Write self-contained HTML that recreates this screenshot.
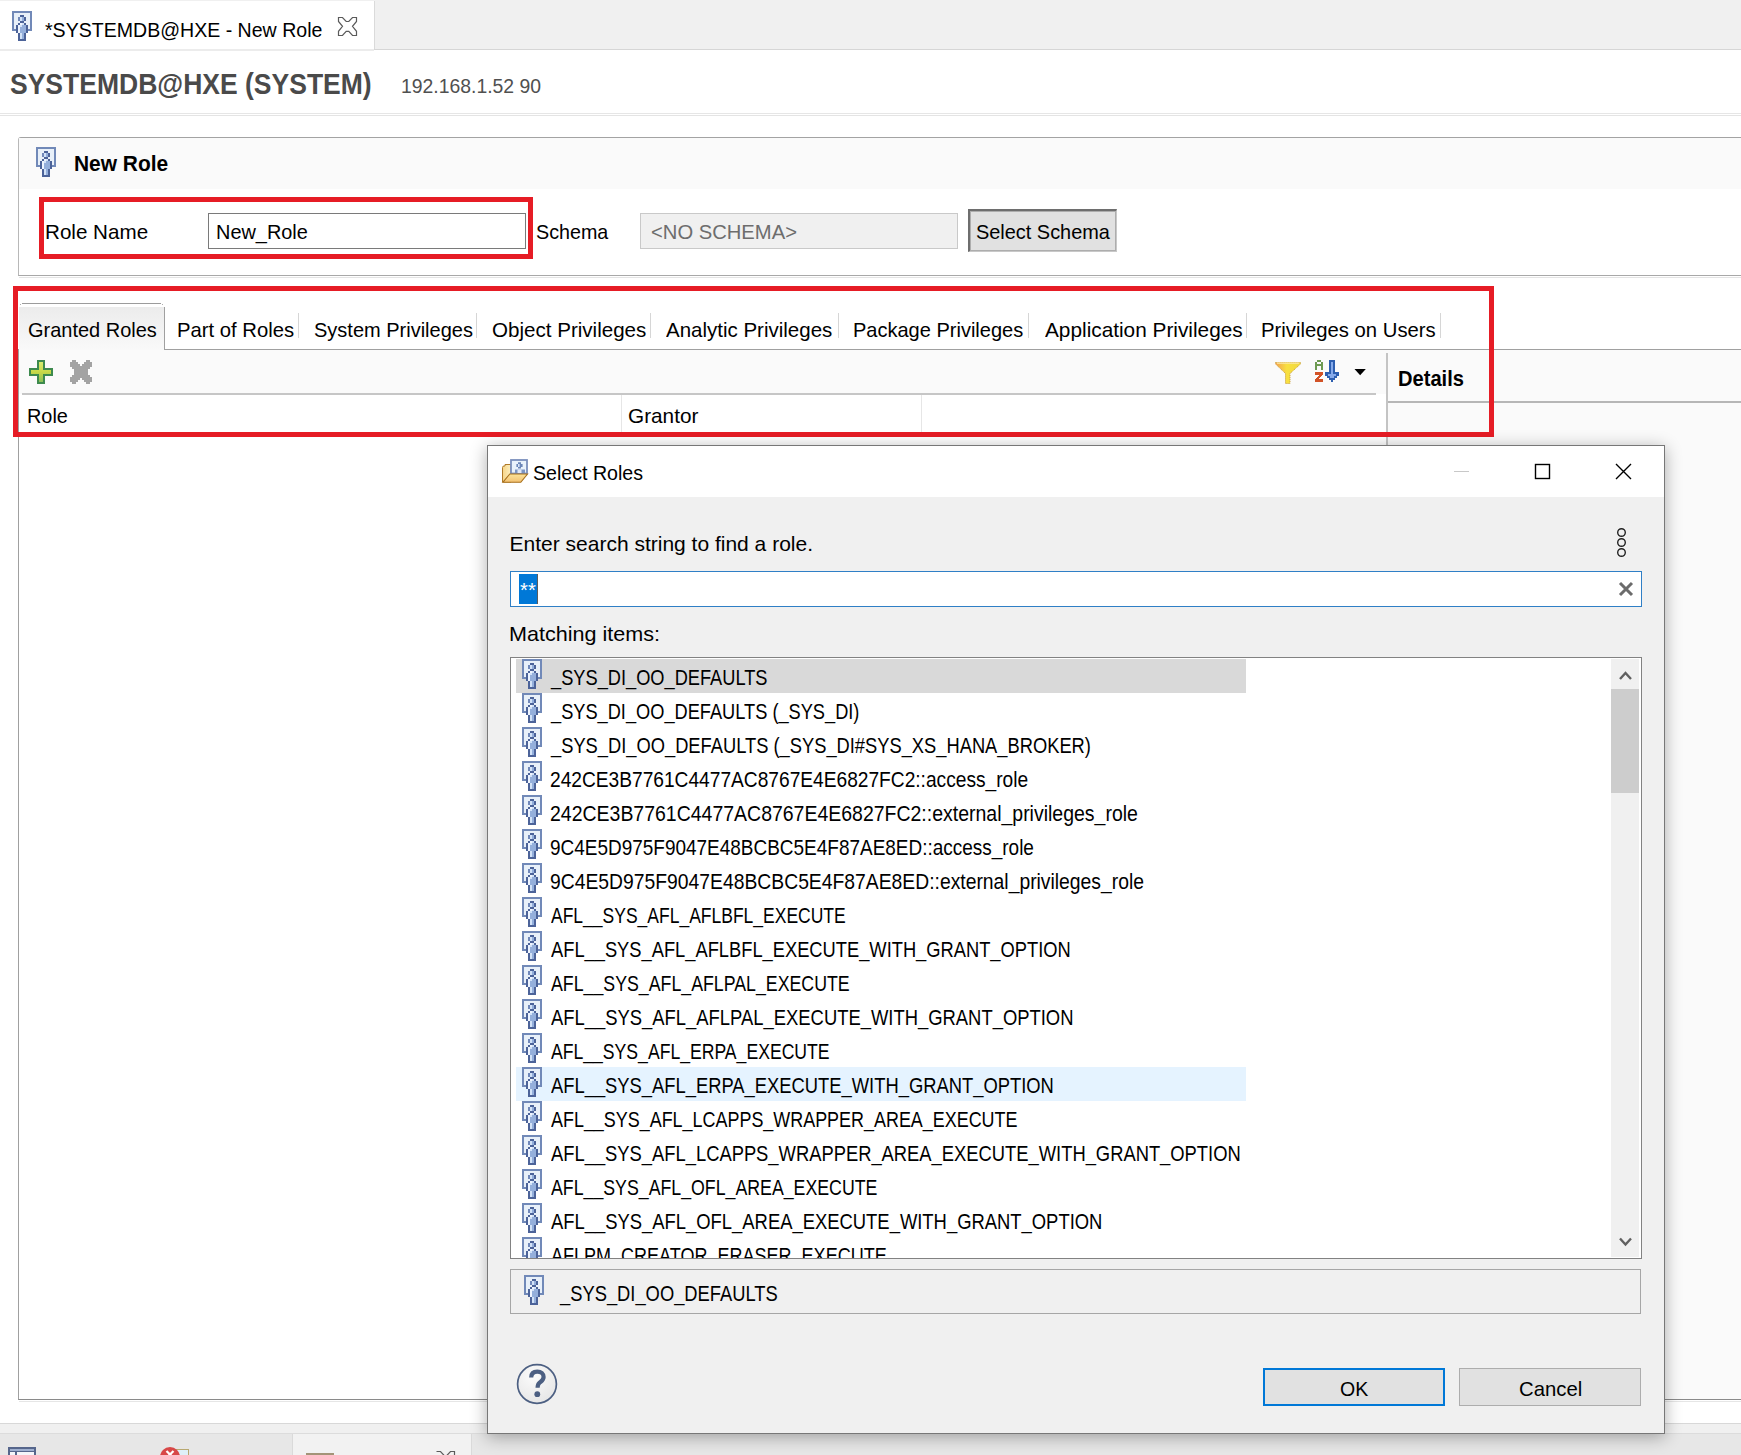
<!DOCTYPE html>
<html><head><meta charset="utf-8"><style>
html,body{margin:0;padding:0;}
body{width:1741px;height:1455px;overflow:hidden;position:relative;background:#fff;font-family:"Liberation Sans",sans-serif;}
.t{position:absolute;white-space:nowrap;transform-origin:0 0;}
.b{position:absolute;}
</style></head><body>
<svg width="0" height="0" style="position:absolute"><defs><symbol id="person" viewBox="0 0 10 15"><rect x="0" y="0" width="1" height="1" fill="#7189b8"/><rect x="1" y="0" width="1" height="1" fill="#7189b8"/><rect x="2" y="0" width="1" height="1" fill="#7189b8"/><rect x="3" y="0" width="1" height="1" fill="#7189b8"/><rect x="4" y="0" width="1" height="1" fill="#7189b8"/><rect x="5" y="0" width="1" height="1" fill="#7189b8"/><rect x="6" y="0" width="1" height="1" fill="#7189b8"/><rect x="7" y="0" width="1" height="1" fill="#7189b8"/><rect x="8" y="0" width="1" height="1" fill="#7189b8"/><rect x="9" y="0" width="1" height="1" fill="#7189b8"/><rect x="0" y="1" width="1" height="1" fill="#7189b8"/><rect x="1" y="1" width="1" height="1" fill="#e8f0f9"/><rect x="2" y="1" width="1" height="1" fill="#e8f0f9"/><rect x="3" y="1" width="1" height="1" fill="#e8f0f9"/><rect x="4" y="1" width="1" height="1" fill="#e8f0f9"/><rect x="5" y="1" width="1" height="1" fill="#e8f0f9"/><rect x="6" y="1" width="1" height="1" fill="#e8f0f9"/><rect x="7" y="1" width="1" height="1" fill="#e8f0f9"/><rect x="8" y="1" width="1" height="1" fill="#e8f0f9"/><rect x="9" y="1" width="1" height="1" fill="#7189b8"/><rect x="0" y="2" width="1" height="1" fill="#7189b8"/><rect x="1" y="2" width="1" height="1" fill="#e8f0f9"/><rect x="2" y="2" width="1" height="1" fill="#e8f0f9"/><rect x="3" y="2" width="1" height="1" fill="#e8f0f9"/><rect x="4" y="2" width="1" height="1" fill="#4c6399"/><rect x="5" y="2" width="1" height="1" fill="#4c6399"/><rect x="6" y="2" width="1" height="1" fill="#e8f0f9"/><rect x="7" y="2" width="1" height="1" fill="#e8f0f9"/><rect x="8" y="2" width="1" height="1" fill="#e8f0f9"/><rect x="9" y="2" width="1" height="1" fill="#7189b8"/><rect x="0" y="3" width="1" height="1" fill="#7189b8"/><rect x="1" y="3" width="1" height="1" fill="#e8f0f9"/><rect x="2" y="3" width="1" height="1" fill="#e8f0f9"/><rect x="3" y="3" width="1" height="1" fill="#7088ba"/><rect x="4" y="3" width="1" height="1" fill="#d2e2f7"/><rect x="5" y="3" width="1" height="1" fill="#94afdb"/><rect x="6" y="3" width="1" height="1" fill="#4c6399"/><rect x="7" y="3" width="1" height="1" fill="#e8f0f9"/><rect x="8" y="3" width="1" height="1" fill="#e8f0f9"/><rect x="9" y="3" width="1" height="1" fill="#7189b8"/><rect x="0" y="4" width="1" height="1" fill="#7189b8"/><rect x="1" y="4" width="1" height="1" fill="#e8f0f9"/><rect x="2" y="4" width="1" height="1" fill="#e8f0f9"/><rect x="3" y="4" width="1" height="1" fill="#7088ba"/><rect x="4" y="4" width="1" height="1" fill="#d2e2f7"/><rect x="5" y="4" width="1" height="1" fill="#94afdb"/><rect x="6" y="4" width="1" height="1" fill="#4c6399"/><rect x="7" y="4" width="1" height="1" fill="#e8f0f9"/><rect x="8" y="4" width="1" height="1" fill="#e8f0f9"/><rect x="9" y="4" width="1" height="1" fill="#7189b8"/><rect x="0" y="5" width="1" height="1" fill="#7189b8"/><rect x="1" y="5" width="1" height="1" fill="#e8f0f9"/><rect x="2" y="5" width="1" height="1" fill="#e8f0f9"/><rect x="3" y="5" width="1" height="1" fill="#e8f0f9"/><rect x="4" y="5" width="1" height="1" fill="#4c6399"/><rect x="5" y="5" width="1" height="1" fill="#4c6399"/><rect x="6" y="5" width="1" height="1" fill="#e8f0f9"/><rect x="7" y="5" width="1" height="1" fill="#e8f0f9"/><rect x="8" y="5" width="1" height="1" fill="#e8f0f9"/><rect x="9" y="5" width="1" height="1" fill="#7189b8"/><rect x="0" y="6" width="1" height="1" fill="#7189b8"/><rect x="1" y="6" width="1" height="1" fill="#e8f0f9"/><rect x="2" y="6" width="1" height="1" fill="#e8f0f9"/><rect x="3" y="6" width="1" height="1" fill="#4c6399"/><rect x="4" y="6" width="1" height="1" fill="#eef5ff"/><rect x="5" y="6" width="1" height="1" fill="#d2e2f7"/><rect x="6" y="6" width="1" height="1" fill="#4c6399"/><rect x="7" y="6" width="1" height="1" fill="#e8f0f9"/><rect x="8" y="6" width="1" height="1" fill="#e8f0f9"/><rect x="9" y="6" width="1" height="1" fill="#7189b8"/><rect x="0" y="7" width="1" height="1" fill="#7189b8"/><rect x="1" y="7" width="1" height="1" fill="#e8f0f9"/><rect x="2" y="7" width="1" height="1" fill="#4c6399"/><rect x="3" y="7" width="1" height="1" fill="#eef5ff"/><rect x="4" y="7" width="1" height="1" fill="#d2e2f7"/><rect x="5" y="7" width="1" height="1" fill="#94afdb"/><rect x="6" y="7" width="1" height="1" fill="#94afdb"/><rect x="7" y="7" width="1" height="1" fill="#4c6399"/><rect x="8" y="7" width="1" height="1" fill="#e8f0f9"/><rect x="9" y="7" width="1" height="1" fill="#7189b8"/><rect x="0" y="8" width="1" height="1" fill="#7189b8"/><rect x="1" y="8" width="1" height="1" fill="#e8f0f9"/><rect x="2" y="8" width="1" height="1" fill="#4c6399"/><rect x="3" y="8" width="1" height="1" fill="#eef5ff"/><rect x="4" y="8" width="1" height="1" fill="#94afdb"/><rect x="5" y="8" width="1" height="1" fill="#94afdb"/><rect x="6" y="8" width="1" height="1" fill="#94afdb"/><rect x="7" y="8" width="1" height="1" fill="#4c6399"/><rect x="8" y="8" width="1" height="1" fill="#e8f0f9"/><rect x="9" y="8" width="1" height="1" fill="#7189b8"/><rect x="0" y="9" width="1" height="1" fill="#7189b8"/><rect x="1" y="9" width="1" height="1" fill="#7189b8"/><rect x="2" y="9" width="1" height="1" fill="#4c6399"/><rect x="3" y="9" width="1" height="1" fill="#eef5ff"/><rect x="4" y="9" width="1" height="1" fill="#94afdb"/><rect x="5" y="9" width="1" height="1" fill="#94afdb"/><rect x="6" y="9" width="1" height="1" fill="#94afdb"/><rect x="7" y="9" width="1" height="1" fill="#4c6399"/><rect x="8" y="9" width="1" height="1" fill="#7189b8"/><rect x="9" y="9" width="1" height="1" fill="#7189b8"/><rect x="2" y="10" width="1" height="1" fill="#4c6399"/><rect x="3" y="10" width="1" height="1" fill="#eef5ff"/><rect x="4" y="10" width="1" height="1" fill="#94afdb"/><rect x="5" y="10" width="1" height="1" fill="#94afdb"/><rect x="6" y="10" width="1" height="1" fill="#94afdb"/><rect x="7" y="10" width="1" height="1" fill="#4c6399"/><rect x="3" y="11" width="1" height="1" fill="#4c6399"/><rect x="4" y="11" width="1" height="1" fill="#d2e2f7"/><rect x="5" y="11" width="1" height="1" fill="#94afdb"/><rect x="6" y="11" width="1" height="1" fill="#4c6399"/><rect x="3" y="12" width="1" height="1" fill="#4c6399"/><rect x="4" y="12" width="1" height="1" fill="#d2e2f7"/><rect x="5" y="12" width="1" height="1" fill="#94afdb"/><rect x="6" y="12" width="1" height="1" fill="#4c6399"/><rect x="3" y="13" width="1" height="1" fill="#4c6399"/><rect x="4" y="13" width="1" height="1" fill="#d2e2f7"/><rect x="5" y="13" width="1" height="1" fill="#94afdb"/><rect x="6" y="13" width="1" height="1" fill="#4c6399"/><rect x="3" y="14" width="1" height="1" fill="#4c6399"/><rect x="4" y="14" width="1" height="1" fill="#4c6399"/><rect x="5" y="14" width="1" height="1" fill="#4c6399"/><rect x="6" y="14" width="1" height="1" fill="#4c6399"/></symbol></defs></svg>
<div class="b" style="left:0px;top:0px;width:1741px;height:50px;background:#f0f0f0;"></div>
<div class="b" style="left:0px;top:1px;width:374px;height:49px;background:#fff;"></div>
<div class="b" style="left:374px;top:1px;width:1px;height:48px;background:#dadada;"></div>
<div class="b" style="left:374px;top:49px;width:1367px;height:1px;background:#d6d6d6;"></div>
<div class="b" style="left:0px;top:49px;width:374px;height:2px;background:#ececec;"></div>
<svg class="b" style="left:12px;top:11px" width="20" height="30" shape-rendering="crispEdges"><use href="#person"/></svg>
<div class="t" style="left:45.27px;top:16.62px;font-size:21px;line-height:26px;color:#000;transform:scaleX(0.9311);">*SYSTEMDB@HXE - New Role</div>
<svg class="b" style="left:336px;top:15px" width="24" height="24" viewBox="336 15 24 24"><path d="M338.5,17.5 H342.5 L346.2,21.5 H348.8 L352.5,17.5 H356.5 V21.5 L352.5,26.3 L356.5,31.3 V35.5 H352.5 L348.8,31.3 H346.2 L342.5,35.5 H338.5 V31.3 L342.5,26.3 L338.5,21.5 Z" fill="none" stroke="#5a5a5a" stroke-width="1.2"/></svg>
<div class="t" style="left:9.99px;top:66.25px;font-size:29px;line-height:36px;color:#4a4a4a;font-weight:bold;transform:scaleX(0.9142);">SYSTEMDB@HXE (SYSTEM)</div>
<div class="t" style="left:401.16px;top:72.60px;font-size:20.5px;line-height:26px;color:#505050;transform:scaleX(0.9449);">192.168.1.52 90</div>
<div class="b" style="left:0px;top:113px;width:1741px;height:1px;background:#e6e6e6;"></div>
<div class="b" style="left:0px;top:115px;width:1741px;height:1px;background:#e4e4e4;"></div>
<div class="b" style="left:18px;top:137px;width:1723px;height:139px;background:#fff;border-top:1px solid #a3a3a3;border-left:1px solid #b8b8b8;border-bottom:1px solid #a8a8a8;border-top-left-radius:3px;box-sizing:border-box;"></div>
<div class="b" style="left:19px;top:138px;width:1722px;height:51px;background:#fafafa;"></div>
<div class="b" style="left:19px;top:277px;width:1722px;height:1px;background:#e4e4e4;"></div>
<svg class="b" style="left:36px;top:147px" width="20" height="30" shape-rendering="crispEdges"><use href="#person"/></svg>
<div class="t" style="left:74.23px;top:151.05px;font-size:21.5px;line-height:27px;color:#000;font-weight:bold;transform:scaleX(0.9737);">New Role</div>
<div class="t" style="left:44.94px;top:218.72px;font-size:21px;line-height:26px;color:#000;transform:scaleX(0.9814);">Role Name</div>
<div class="b" style="left:208px;top:213px;width:318px;height:36px;background:#fff;border:1px solid #7a7a7a;box-sizing:border-box;"></div>
<div class="t" style="left:216.30px;top:219.12px;font-size:21px;line-height:26px;color:#000;transform:scaleX(0.9479);">New_Role</div>
<div class="t" style="left:535.86px;top:218.52px;font-size:21px;line-height:26px;color:#000;transform:scaleX(0.9382);">Schema</div>
<div class="b" style="left:640px;top:213px;width:318px;height:36px;background:#f0f0f0;border:1px solid #c9c9c9;box-sizing:border-box;"></div>
<div class="t" style="left:650.74px;top:218.72px;font-size:21px;line-height:26px;color:#6d6d6d;transform:scaleX(0.9620);">&lt;NO SCHEMA&gt;</div>
<div class="b" style="left:968px;top:209px;width:149px;height:43px;background:#e1e1e1;border-top:2px solid #6e6e6e;border-left:2px solid #6e6e6e;border-right:1px solid #c8c8c8;border-bottom:1px solid #c8c8c8;box-sizing:border-box;"></div>
<div class="b" style="left:970px;top:211px;width:146px;height:40px;border:1px solid #adadad;box-sizing:border-box;"></div>
<div class="t" style="left:975.65px;top:219.32px;font-size:21px;line-height:26px;color:#000;transform:scaleX(0.9479);">Select Schema</div>
<div class="b" style="left:18px;top:349px;width:1723px;height:1051px;background:#fff;border-left:1px solid #a0a0a0;border-bottom:1px solid #8a8a8a;box-sizing:border-box;"></div>
<div class="b" style="left:164px;top:349px;width:1577px;height:1px;background:#a0a0a0;"></div>
<div class="b" style="left:19px;top:307px;width:145px;height:43px;background:linear-gradient(#ececec,#f9f9f9);"></div>
<div class="b" style="left:22px;top:303px;width:139px;height:1px;background:#9c9c9c;"></div>
<div class="b" style="left:20px;top:304px;width:1px;height:1px;background:#b0b0b0;"></div>
<div class="b" style="left:162px;top:304px;width:1px;height:1px;background:#b0b0b0;"></div>
<div class="b" style="left:164px;top:307px;width:1px;height:43px;background:#a0a0a0;"></div>
<div class="t" style="left:27.75px;top:316.52px;font-size:21px;line-height:26px;color:#000;transform:scaleX(0.9515);">Granted Roles</div>
<div class="t" style="left:176.77px;top:316.52px;font-size:21px;line-height:26px;color:#000;transform:scaleX(0.9647);">Part of Roles</div>
<div class="b" style="left:298px;top:313px;width:1px;height:25px;background:#d6d6d6;"></div>
<div class="t" style="left:313.55px;top:316.52px;font-size:21px;line-height:26px;color:#000;transform:scaleX(0.9521);">System Privileges</div>
<div class="b" style="left:476px;top:313px;width:1px;height:25px;background:#d6d6d6;"></div>
<div class="t" style="left:491.62px;top:316.52px;font-size:21px;line-height:26px;color:#000;transform:scaleX(0.9795);">Object Privileges</div>
<div class="b" style="left:650px;top:313px;width:1px;height:25px;background:#d6d6d6;"></div>
<div class="t" style="left:666.40px;top:316.52px;font-size:21px;line-height:26px;color:#000;transform:scaleX(0.9759);">Analytic Privileges</div>
<div class="b" style="left:838px;top:313px;width:1px;height:25px;background:#d6d6d6;"></div>
<div class="t" style="left:852.89px;top:316.52px;font-size:21px;line-height:26px;color:#000;transform:scaleX(0.9528);">Package Privileges</div>
<div class="b" style="left:1028px;top:313px;width:1px;height:25px;background:#d6d6d6;"></div>
<div class="t" style="left:1044.50px;top:316.52px;font-size:21px;line-height:26px;color:#000;transform:scaleX(0.9905);">Application Privileges</div>
<div class="b" style="left:1246px;top:313px;width:1px;height:25px;background:#d6d6d6;"></div>
<div class="t" style="left:1260.67px;top:316.52px;font-size:21px;line-height:26px;color:#000;transform:scaleX(0.9657);">Privileges on Users</div>
<div class="b" style="left:1440px;top:313px;width:1px;height:25px;background:#d6d6d6;"></div>
<div class="b" style="left:19px;top:350px;width:1368px;height:44px;background:#fafafa;"></div>
<div class="b" style="left:22px;top:393px;width:1354px;height:2px;background:#c6c6c6;"></div>
<svg class="b" style="left:29px;top:360px" width="24" height="24" viewBox="0 0 24 24" shape-rendering="crispEdges"><defs><linearGradient id="pg" x1="0" y1="0" x2="0" y2="1"><stop offset="0" stop-color="#d8ec70"/><stop offset="0.5" stop-color="#c8d848"/><stop offset="1" stop-color="#88c058"/></linearGradient></defs><path d="M8,0 H16 V8 H24 V16 H16 V24 H8 V16 H0 V8 H8 Z" fill="#3d8a4e"/><path d="M10,2 H14 V10 H22 V14 H14 V22 H10 V14 H2 V10 H10 Z" fill="url(#pg)"/></svg>
<svg class="b" style="left:70px;top:360px" width="22" height="24" viewBox="0 0 22 24" shape-rendering="crispEdges"><path d="M2,0 H6 V2 H8 V4 H10 V6 H12 V4 H14 V2 H16 V0 H20 V2 H22 V7 H20 V9 H18 V15 H20 V17 H22 V22 H20 V24 H16 V22 H14 V20 H12 V18 H10 V20 H8 V22 H6 V24 H2 V22 H0 V17 H2 V15 H4 V9 H2 V7 H0 V2 H2 Z" fill="#a3a3a3"/></svg>
<svg class="b" style="left:1274px;top:360px" width="28" height="26" viewBox="1274 360 28 26"><defs><linearGradient id="fg" x1="0" y1="0" x2="1" y2="0"><stop offset="0" stop-color="#f4a050"/><stop offset="0.45" stop-color="#f8e040"/><stop offset="1" stop-color="#f0d840"/></linearGradient></defs><path d="M1275.5,362.5 H1300.5 V364 L1290,373.5 V383.5 H1285.5 V373.5 L1275.5,364 Z" fill="url(#fg)" stroke="#c9a03a" stroke-width="0.9" stroke-dasharray="1.2,0.8"/><path d="M1277,362.6 H1299 V363.8 H1277 Z" fill="#fbe7a0"/></svg>
<svg class="b" style="left:1313px;top:359px" width="28" height="26" viewBox="1313 359 28 26" shape-rendering="crispEdges"><path d="M1315,370 V362 H1317 V360 H1321 V362 H1323 V370 H1321 V366 H1317 V370 Z M1317,362 V364 H1321 V362 Z" fill="#6d9a52" fill-rule="evenodd"/><path d="M1315,372 H1323 V375 L1318.5,379 H1323 V382 H1315 V379 L1319.5,375 H1315 Z" fill="#d25226"/><path d="M1329,360 H1335 V372 H1339 V376 H1337 V378 H1335 V380 H1333 V382 H1331 V380 H1329 V378 H1327 V376 H1325 V372 H1329 Z" fill="#2d5fb0"/><path d="M1331,362 H1333 V374 H1336 V376 H1334 V378 H1332 V380 V378 H1330 V376 H1328 V374 H1331 Z" fill="#86aaea"/></svg>
<svg class="b" style="left:1354px;top:368px" width="13" height="8" viewBox="0 0 13 8"><path d="M0.5,1 H11.8 L6.15,7.2 Z" fill="#000"/></svg>
<div class="b" style="left:1387px;top:350px;width:354px;height:1049px;background:#fafafa;"></div>
<div class="b" style="left:1386px;top:353px;width:2px;height:1046px;background:#c4c4c4;"></div>
<div class="b" style="left:1388px;top:401px;width:353px;height:2px;background:#b6b6b6;"></div>
<div class="t" style="left:1398.27px;top:366.35px;font-size:21.5px;line-height:27px;color:#000;font-weight:bold;transform:scaleX(0.9348);">Details</div>
<div class="t" style="left:27.41px;top:402.62px;font-size:21px;line-height:26px;color:#000;transform:scaleX(0.9475);">Role</div>
<div class="t" style="left:627.71px;top:402.52px;font-size:21px;line-height:26px;color:#000;transform:scaleX(0.9886);">Grantor</div>
<div class="b" style="left:621px;top:395px;width:1px;height:41px;background:#e6e6e6;"></div>
<div class="b" style="left:921px;top:395px;width:1px;height:41px;background:#e6e6e6;"></div>
<div class="b" style="left:39px;top:197px;width:494px;height:62px;border:5px solid #e61c25;box-sizing:border-box;"></div>
<div class="b" style="left:13px;top:286px;width:1481px;height:151px;border:5px solid #e61c25;box-sizing:border-box;"></div>
<div class="b" style="left:0px;top:1400px;width:1741px;height:55px;background:#fff;"></div>
<div class="b" style="left:19px;top:1401px;width:1722px;height:1px;background:#e6e6e6;"></div>
<div class="b" style="left:0px;top:1423px;width:1741px;height:1px;background:#d8d8d8;"></div>
<div class="b" style="left:0px;top:1424px;width:1741px;height:9px;background:#f0f0f0;"></div>
<div class="b" style="left:0px;top:1433px;width:1741px;height:1px;background:#dcdcdc;"></div>
<div class="b" style="left:0px;top:1434px;width:1741px;height:21px;background:#e7e7e7;"></div>
<div class="b" style="left:292px;top:1434px;width:180px;height:21px;background:#f2f2f2;border-left:1px solid #dadada;border-right:1px solid #dadada;box-sizing:border-box;"></div>
<div class="b" style="left:8px;top:1447px;width:28px;height:8px;background:#56668c;"></div>
<div class="b" style="left:10px;top:1449px;width:24px;height:2px;background:#9fb0d0;"></div>
<div class="b" style="left:10px;top:1452px;width:5px;height:3px;background:#f4f6fa;"></div>
<div class="b" style="left:17px;top:1452px;width:17px;height:3px;background:#f4f6fa;"></div>
<svg class="b" style="left:158px;top:1444px" width="34" height="11"><rect x="17.5" y="5.5" width="13" height="10" fill="#dff0f8" stroke="#b8a870"/><circle cx="12" cy="13" r="10" fill="#d84848"/><path d="M8.5,7 L15.5,14 M15.5,7 L8.5,14" stroke="#fff" stroke-width="2.2"/></svg>
<div class="b" style="left:306px;top:1453px;width:28px;height:2px;background:#a39478;"></div>
<svg class="b" style="left:434px;top:1449px" width="24" height="6" viewBox="434 1449 24 6"><path d="M436.5,1451.5 H440.5 L444.2,1455.5 H446.8 L450.5,1451.5 H454.5 V1455.5" fill="none" stroke="#5a5a5a" stroke-width="1.2"/></svg>
<div class="b" style="left:487px;top:445px;width:1178px;height:989px;background:#f0f0f0;border:1px solid #777;box-sizing:border-box;box-shadow:0 3px 16px rgba(0,0,0,0.32);z-index:5;"></div>
<div class="b" style="left:488px;top:446px;width:1176px;height:51px;background:#fff;z-index:5;"></div>
<svg class="b" style="left:498px;top:455px;z-index:6" width="34" height="32" viewBox="498 455 34 32"><defs><linearGradient id="fo" x1="0" y1="0" x2="0" y2="1"><stop offset="0" stop-color="#fbe39a"/><stop offset="1" stop-color="#f3c172"/></linearGradient><linearGradient id="fb" x1="0" y1="0" x2="1" y2="0"><stop offset="0" stop-color="#f6d488"/><stop offset="1" stop-color="#fcefc0"/></linearGradient></defs><path d="M502.5,482 V467.5 Q502.5,466 504,466 H505 V464.5 H511 V482 Z" fill="url(#fb)" stroke="#b07a28" stroke-width="1"/><rect x="511" y="460" width="16" height="13.5" fill="#e9f2fb" stroke="#7a8fbc" stroke-width="1.8"/><path d="M518,462.3 h3 v1.6 h1.6 v3 h-1.6 v1.6 h-3 v-1.6 h-1.6 v-3 h1.6 z" fill="#6b86b8"/><rect x="518" y="464" width="1.6" height="3" fill="#d8e6fa"/><path d="M515,469.5 h10 v3.5 h-10 z" fill="#7d96c4"/><path d="M517.5,469.5 h4 v3.5 h-4 z" fill="#e0e8f8"/><path d="M502.8,482.3 L509.8,474 H527.5 L520.8,482.3 Z" fill="url(#fo)" stroke="#a8701c" stroke-width="1.1"/></svg>
<div class="t" style="left:533.07px;top:459.82px;font-size:21px;line-height:26px;color:#000;transform:scaleX(0.9336);z-index:6;">Select Roles</div>
<div class="b" style="left:1454px;top:471px;width:15px;height:1px;background:#c8c8c8;z-index:6;"></div>
<svg class="b" style="left:1534px;top:463px;z-index:6" width="17" height="17"><rect x="1.5" y="1.5" width="14" height="14" fill="none" stroke="#000" stroke-width="1.4"/></svg>
<svg class="b" style="left:1614px;top:462px;z-index:6" width="19" height="19"><path d="M2,2 L17,17 M17,2 L2,17" stroke="#000" stroke-width="1.4"/></svg>
<div class="t" style="left:509.50px;top:530.82px;font-size:21px;line-height:26px;color:#000;z-index:6;">Enter search string to find a role.</div>
<svg class="b" style="left:1613px;top:524px;z-index:6" width="18" height="38"><g fill="none" stroke="#222" stroke-width="1.4"><circle cx="8.5" cy="8.5" r="3.8"/><circle cx="8.5" cy="18.5" r="3.8"/><circle cx="8.5" cy="28.5" r="3.8"/></g></svg>
<div class="b" style="left:510px;top:571px;width:1132px;height:36px;background:#fff;border:1px solid #2f7fc6;box-sizing:border-box;z-index:6;"></div>
<div class="b" style="left:519px;top:574px;width:18px;height:30px;background:#0078d7;z-index:6;"></div>
<div class="b" style="left:537px;top:574px;width:1px;height:30px;background:#5c5c5c;z-index:6;"></div>
<div class="t" style="left:519.53px;top:576.72px;font-size:21px;line-height:26px;color:#fff;transform:scaleX(0.9667);z-index:7;">**</div>
<svg class="b" style="left:1617px;top:580px;z-index:6" width="18" height="18"><path d="M3,3 L15,15 M15,3 L3,15" stroke="#6b6b6b" stroke-width="3"/></svg>
<div class="t" style="left:508.85px;top:620.72px;font-size:21px;line-height:26px;color:#000;transform:scaleX(1.0273);z-index:6;">Matching items:</div>
<div class="b" style="left:510px;top:657px;width:1132px;height:602px;background:#fff;border:1px solid #828282;box-sizing:border-box;z-index:6;overflow:hidden;">
<div class="b" style="left:5px;top:1px;width:730px;height:34px;background:#d9d9d9;"></div>
<svg class="b" style="left:11px;top:1px" width="20" height="30" shape-rendering="crispEdges"><use href="#person"/></svg>
<div class="t" style="left:39.50px;top:6.28px;font-size:22px;line-height:28px;color:#000;transform:scaleX(0.8288);">_SYS_DI_OO_DEFAULTS</div>
<svg class="b" style="left:11px;top:35px" width="20" height="30" shape-rendering="crispEdges"><use href="#person"/></svg>
<div class="t" style="left:39.50px;top:40.28px;font-size:22px;line-height:28px;color:#000;transform:scaleX(0.8280);">_SYS_DI_OO_DEFAULTS (_SYS_DI)</div>
<svg class="b" style="left:11px;top:69px" width="20" height="30" shape-rendering="crispEdges"><use href="#person"/></svg>
<div class="t" style="left:39.50px;top:74.28px;font-size:22px;line-height:28px;color:#000;transform:scaleX(0.8321);">_SYS_DI_OO_DEFAULTS (_SYS_DI#SYS_XS_HANA_BROKER)</div>
<svg class="b" style="left:11px;top:103px" width="20" height="30" shape-rendering="crispEdges"><use href="#person"/></svg>
<div class="t" style="left:38.63px;top:108.28px;font-size:22px;line-height:28px;color:#000;transform:scaleX(0.8707);">242CE3B7761C4477AC8767E4E6827FC2::access_role</div>
<svg class="b" style="left:11px;top:137px" width="20" height="30" shape-rendering="crispEdges"><use href="#person"/></svg>
<div class="t" style="left:38.61px;top:142.28px;font-size:22px;line-height:28px;color:#000;transform:scaleX(0.8852);">242CE3B7761C4477AC8767E4E6827FC2::external_privileges_role</div>
<svg class="b" style="left:11px;top:171px" width="20" height="30" shape-rendering="crispEdges"><use href="#person"/></svg>
<div class="t" style="left:38.64px;top:176.28px;font-size:22px;line-height:28px;color:#000;transform:scaleX(0.8621);">9C4E5D975F9047E48BCBC5E4F87AE8ED::access_role</div>
<svg class="b" style="left:11px;top:205px" width="20" height="30" shape-rendering="crispEdges"><use href="#person"/></svg>
<div class="t" style="left:38.62px;top:210.28px;font-size:22px;line-height:28px;color:#000;transform:scaleX(0.8783);">9C4E5D975F9047E48BCBC5E4F87AE8ED::external_privileges_role</div>
<svg class="b" style="left:11px;top:239px" width="20" height="30" shape-rendering="crispEdges"><use href="#person"/></svg>
<div class="t" style="left:39.50px;top:244.28px;font-size:22px;line-height:28px;color:#000;transform:scaleX(0.7954);">AFL__SYS_AFL_AFLBFL_EXECUTE</div>
<svg class="b" style="left:11px;top:273px" width="20" height="30" shape-rendering="crispEdges"><use href="#person"/></svg>
<div class="t" style="left:39.50px;top:278.28px;font-size:22px;line-height:28px;color:#000;transform:scaleX(0.8318);">AFL__SYS_AFL_AFLBFL_EXECUTE_WITH_GRANT_OPTION</div>
<svg class="b" style="left:11px;top:307px" width="20" height="30" shape-rendering="crispEdges"><use href="#person"/></svg>
<div class="t" style="left:39.50px;top:312.28px;font-size:22px;line-height:28px;color:#000;transform:scaleX(0.8070);">AFL__SYS_AFL_AFLPAL_EXECUTE</div>
<svg class="b" style="left:11px;top:341px" width="20" height="30" shape-rendering="crispEdges"><use href="#person"/></svg>
<div class="t" style="left:39.50px;top:346.28px;font-size:22px;line-height:28px;color:#000;transform:scaleX(0.8368);">AFL__SYS_AFL_AFLPAL_EXECUTE_WITH_GRANT_OPTION</div>
<svg class="b" style="left:11px;top:375px" width="20" height="30" shape-rendering="crispEdges"><use href="#person"/></svg>
<div class="t" style="left:39.50px;top:380.28px;font-size:22px;line-height:28px;color:#000;transform:scaleX(0.8003);">AFL__SYS_AFL_ERPA_EXECUTE</div>
<div class="b" style="left:5px;top:409px;width:730px;height:34px;background:#e5f3ff;"></div>
<svg class="b" style="left:11px;top:409px" width="20" height="30" shape-rendering="crispEdges"><use href="#person"/></svg>
<div class="t" style="left:39.50px;top:414.28px;font-size:22px;line-height:28px;color:#000;transform:scaleX(0.8348);">AFL__SYS_AFL_ERPA_EXECUTE_WITH_GRANT_OPTION</div>
<svg class="b" style="left:11px;top:443px" width="20" height="30" shape-rendering="crispEdges"><use href="#person"/></svg>
<div class="t" style="left:39.50px;top:448.28px;font-size:22px;line-height:28px;color:#000;transform:scaleX(0.8152);">AFL__SYS_AFL_LCAPPS_WRAPPER_AREA_EXECUTE</div>
<svg class="b" style="left:11px;top:477px" width="20" height="30" shape-rendering="crispEdges"><use href="#person"/></svg>
<div class="t" style="left:39.50px;top:482.28px;font-size:22px;line-height:28px;color:#000;transform:scaleX(0.8345);">AFL__SYS_AFL_LCAPPS_WRAPPER_AREA_EXECUTE_WITH_GRANT_OPTION</div>
<svg class="b" style="left:11px;top:511px" width="20" height="30" shape-rendering="crispEdges"><use href="#person"/></svg>
<div class="t" style="left:39.50px;top:516.28px;font-size:22px;line-height:28px;color:#000;transform:scaleX(0.8064);">AFL__SYS_AFL_OFL_AREA_EXECUTE</div>
<svg class="b" style="left:11px;top:545px" width="20" height="30" shape-rendering="crispEdges"><use href="#person"/></svg>
<div class="t" style="left:39.50px;top:550.28px;font-size:22px;line-height:28px;color:#000;transform:scaleX(0.8367);">AFL__SYS_AFL_OFL_AREA_EXECUTE_WITH_GRANT_OPTION</div>
<svg class="b" style="left:11px;top:579px" width="20" height="30" shape-rendering="crispEdges"><use href="#person"/></svg>
<div class="t" style="left:39.50px;top:584.28px;font-size:22px;line-height:28px;color:#000;transform:scaleX(0.8188);">AFLPM_CREATOR_ERASER_EXECUTE</div>
<div class="b" style="left:1100px;top:1px;width:28px;height:598px;background:#f0f0f0;"></div>
<div class="b" style="left:1100px;top:31px;width:28px;height:104px;background:#cdcdcd;"></div>
<svg class="b" style="left:1107px;top:11px" width="15" height="13"><path d="M2,10 L7.5,4 L13,10" fill="none" stroke="#606060" stroke-width="2.4"/></svg>
<svg class="b" style="left:1107px;top:578px" width="15" height="13"><path d="M2,2.5 L7.5,8.5 L13,2.5" fill="none" stroke="#606060" stroke-width="2.4"/></svg>
</div>
<div class="b" style="left:510px;top:1269px;width:1131px;height:45px;background:#f0f0f0;border:1px solid #a6a6a6;box-sizing:border-box;z-index:6;"></div>
<svg class="b" style="left:524px;top:1275px;z-index:6" width="20" height="30" shape-rendering="crispEdges"><use href="#person"/></svg>
<div class="t" style="left:560.30px;top:1280.28px;font-size:22px;line-height:28px;color:#000;transform:scaleX(0.8335);z-index:6;">_SYS_DI_OO_DEFAULTS</div>
<svg class="b" style="left:515px;top:1362px;z-index:6" width="44" height="44" viewBox="515 1362 44 44"><defs><radialGradient id="hg" cx="0.4" cy="0.3" r="0.8"><stop offset="0" stop-color="#fbfbfb"/><stop offset="1" stop-color="#e4e4e4"/></radialGradient></defs><circle cx="537" cy="1384" r="19.4" fill="url(#hg)" stroke="#4c5f82" stroke-width="1.7"/><path d="M531.2,1377.5 C531.2,1373.2 534,1371.6 537.3,1371.6 C541.2,1371.6 543.6,1373.8 543.6,1377 C543.6,1380.2 541.2,1381.3 539.6,1382.6 C538.4,1383.6 537.6,1384.5 537.6,1387.8" fill="none" stroke="#4c5f82" stroke-width="4.2"/><circle cx="537.3" cy="1394.2" r="2.9" fill="#4c5f82"/></svg>
<div class="b" style="left:1263px;top:1368px;width:182px;height:38px;background:#e1e1e1;border:2px solid #0078d7;box-sizing:border-box;z-index:6;"></div>
<div class="t" style="left:1339.57px;top:1375.72px;font-size:21px;line-height:26px;color:#000;transform:scaleX(0.9310);z-index:7;">OK</div>
<div class="b" style="left:1459px;top:1368px;width:182px;height:38px;background:#e1e1e1;border:1px solid #adadad;box-sizing:border-box;z-index:6;"></div>
<div class="t" style="left:1518.63px;top:1375.72px;font-size:21px;line-height:26px;color:#000;transform:scaleX(0.9667);z-index:7;">Cancel</div>
</body></html>
